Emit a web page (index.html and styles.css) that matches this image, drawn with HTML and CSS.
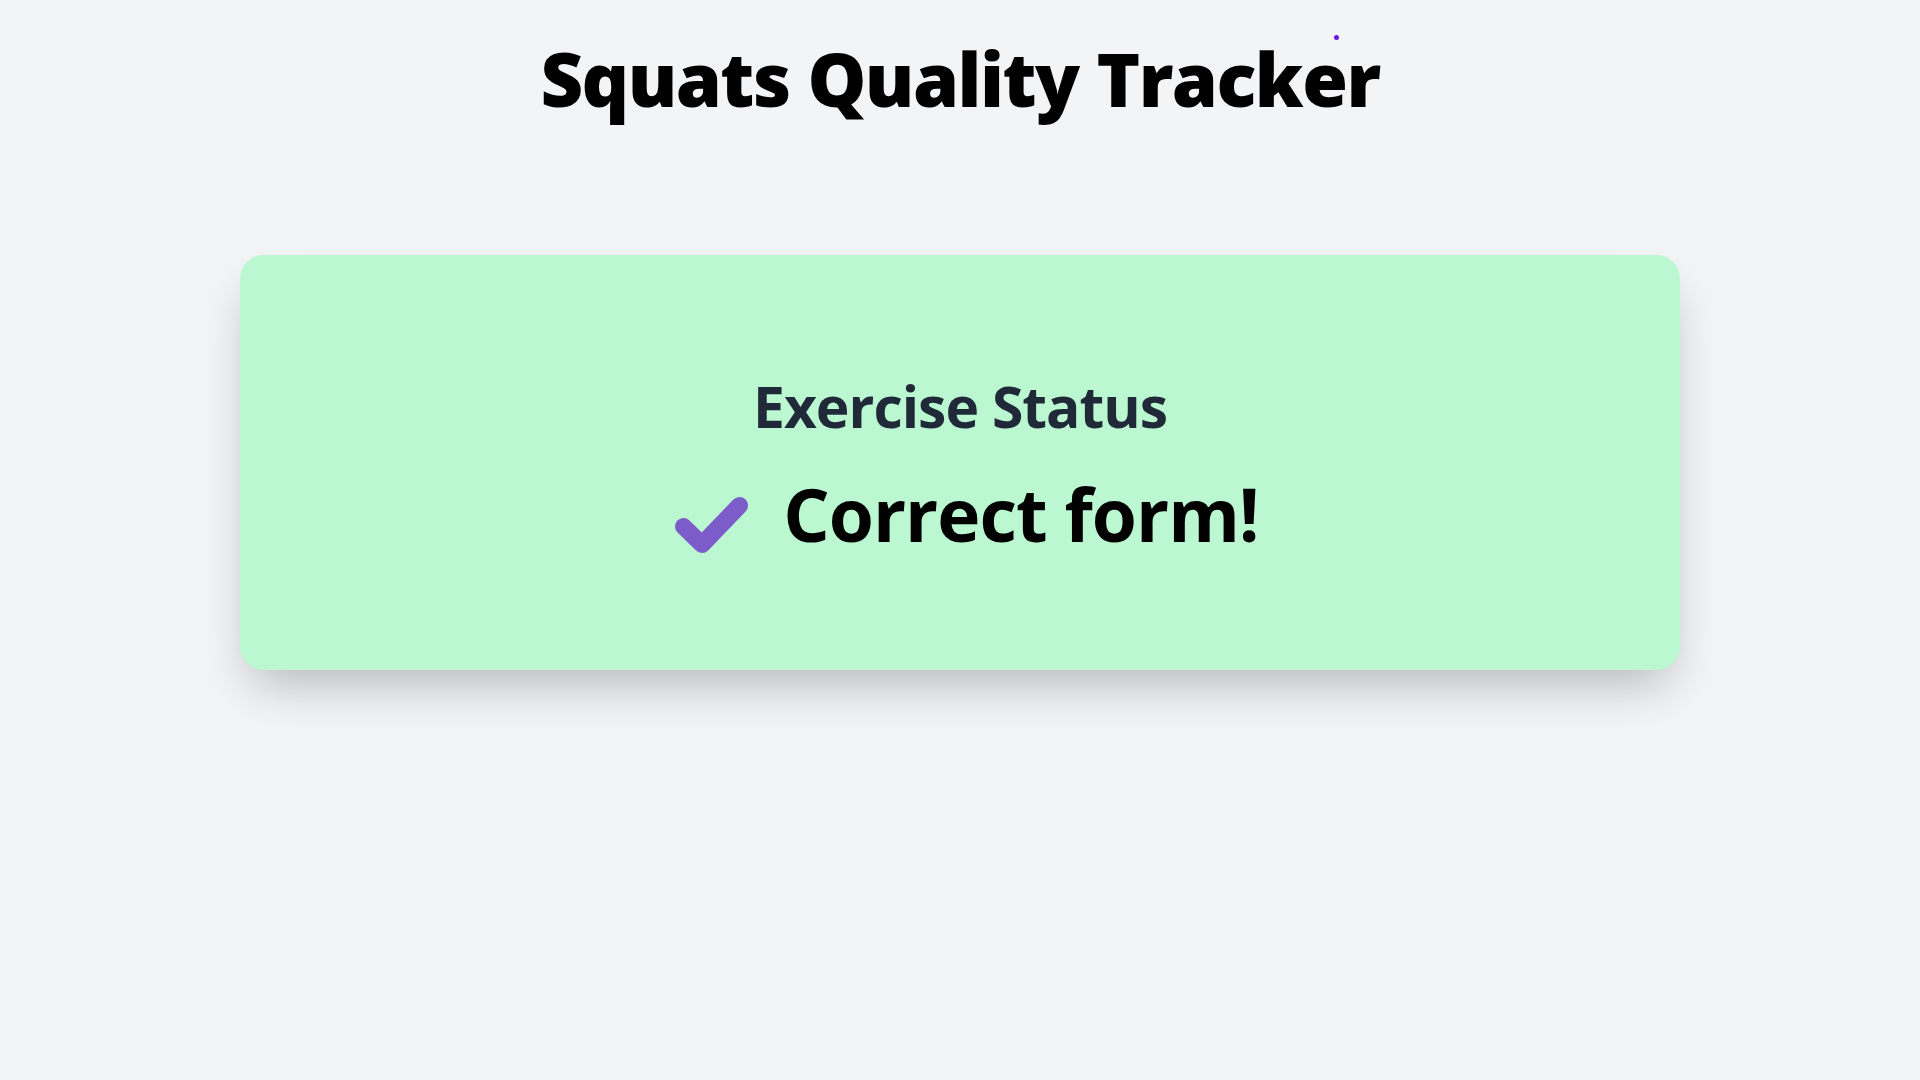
FILE: index.html
```html
<!DOCTYPE html>
<html lang="en">
<head>
<meta charset="utf-8">
<title>Squats Quality Tracker</title>
<link rel="stylesheet" href="styles.css">
</head>
<body>
<div class="page">
  <header class="header">
    <h1 class="title">Squats Quality Tracker</h1>
    <span class="dot"></span>
  </header>
  <main class="card">
    <h2 class="card-heading">Exercise Status</h2>
    <div class="status">
      <svg class="check" width="78" height="62" viewBox="0 0 78 62" aria-hidden="true">
        <polyline points="10.5,31.5 29,49.5 66.5,10.5" fill="none" stroke="#7b5cc8" stroke-width="17" stroke-linecap="round" stroke-linejoin="round"/>
      </svg>
      <span class="status-text">Correct form!</span>
    </div>
  </main>
</div>
</body>
</html>
```
FILE: styles.css
```css
html, body {
  margin: 0;
  padding: 0;
}
body {
  background: #f3f4f6;
  font-family: "Open Sans", "Liberation Sans", sans-serif;
  color: #000;
  min-height: 1080px;
}
.page {
  display: flex;
  flex-direction: column;
  align-items: center;
}
.header {
  position: relative;
  width: 100%;
  display: flex;
  justify-content: center;
  padding-top: 42px;
}
.title {
  margin: 0;
  font-size: 74px;
  line-height: 1;
  font-weight: 800;
  letter-spacing: -1.5px;
}
.dot {
  position: absolute;
  left: 1334px;
  top: 35px;
  width: 5px;
  height: 5px;
  border-radius: 50%;
  background: #6d16e0;
}
.card {
  margin-top: 139px;
  width: 1440px;
  height: 415px;
  box-sizing: border-box;
  padding-top: 10px;
  background: #bbf7d0;
  border-radius: 24px;
  box-shadow: 0 25px 50px -12px rgba(0, 0, 0, 0.25);
  display: flex;
  flex-direction: column;
  align-items: center;
  justify-content: center;
  gap: 42px;
}
.card-heading {
  margin: 0;
  font-size: 57px;
  line-height: 1;
  font-weight: 700;
  color: #1f2937;
  letter-spacing: -1px;
}
.status {
  display: flex;
  align-items: flex-start;
  gap: 32px;
  padding-left: 12px;
}
.check {
  display: block;
  flex: none;
  margin-top: 18px;
}
.status-text {
  font-size: 73px;
  line-height: 1;
  font-weight: 700;
  color: #000;
  letter-spacing: -1px;
}
```
